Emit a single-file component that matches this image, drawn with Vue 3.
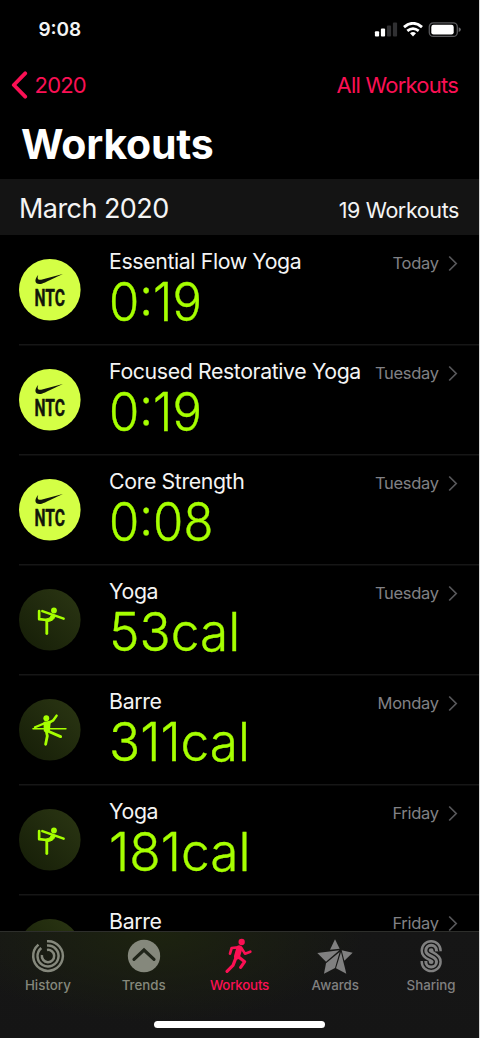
<script setup>
const workouts = [
  { name: 'Essential Flow Yoga', value: '0:19', day: 'Today', icon: 'ntc' },
  { name: 'Focused Restorative Yoga', value: '0:19', day: 'Tuesday', icon: 'ntc' },
  { name: 'Core Strength', value: '0:08', day: 'Tuesday', icon: 'ntc' },
  { name: 'Yoga', value: '53cal', day: 'Tuesday', icon: 'yoga' },
  { name: 'Barre', value: '311cal', day: 'Monday', icon: 'barre' },
  { name: 'Yoga', value: '181cal', day: 'Friday', icon: 'yoga' },
  { name: 'Barre', value: '', day: 'Friday', icon: 'barre' },
]
const tabs = ['History', 'Trends', 'Workouts', 'Awards', 'Sharing']
// stacked strokes that produce the parallel lines of the sharing glyph
const sharingLayers = [
  [32, 'currentColor'],
  [17.5, '#161616'],
  [9, 'currentColor'],
]
</script>

<template>
  <div class="screen">
    <header class="status">
      <span class="time">9:08</span>
      <svg class="indicators" width="88" height="18" viewBox="0 0 88 18">
        <g fill="#fff">
          <rect x="0.9" y="9.2" width="4.2" height="5.4" rx="1" />
          <rect x="6.9" y="6.6" width="4.2" height="8" rx="1" />
          <rect x="12.9" y="3.6" width="4.2" height="11" rx="1" fill="#303032" />
          <rect x="18.9" y="0.6" width="4.2" height="14" rx="1" fill="#303032" />
        </g>
        <g fill="none" stroke="#fff">
          <path d="M30 5.1 Q39 -2.4 48 5.1" stroke-width="2.9" />
          <path d="M33.3 8.9 Q39 4.2 44.7 8.9" stroke-width="2.7" />
        </g>
        <path d="M36 11.2 Q39 8.8 42 11.2 L39 14.4 Z" fill="#fff" />
        <rect x="55.3" y="0.8" width="28" height="13.6" rx="4" fill="none" stroke="#59595c" stroke-width="1.3" />
        <rect x="57.3" y="2.8" width="22.4" height="9.6" rx="2.2" fill="#fff" />
        <path d="M84.7 5.2 Q86.9 5.8 86.9 7.6 Q86.9 9.4 84.7 10 Z" fill="#68686b" />
      </svg>
    </header>

    <nav class="nav">
      <a class="back">
        <svg width="17" height="28" viewBox="0 0 17 28">
          <path d="M14.2 2.3 L2.8 14 L14.2 25.7" fill="none" stroke="#fb1054" stroke-width="3.8" stroke-linecap="round" stroke-linejoin="round" />
        </svg>
        <span>2020</span>
      </a>
      <a class="all">All Workouts</a>
    </nav>

    <h1>Workouts</h1>

    <section class="month">
      <span class="month-name">March 2020</span>
      <span class="month-count">19 Workouts</span>
    </section>

    <main class="list">
      <article v-for="(w, i) in workouts" :key="i" class="row">
        <svg v-if="w.icon === 'ntc'" class="badge" viewBox="0 0 61.6 61.6">
          <circle cx="30.8" cy="30.8" r="30.8" fill="#d4ff45" />
          <path d="M19.3 15.8 C15.2 20.5 15.4 25 20.5 25 C23 25 26.6 23.2 43.8 14.9 L22.2 20.7 C18.7 21.5 18 19.2 19.3 15.8 Z" fill="#11150a" />
          <text x="15.5" y="46.9" textLength="30.4" lengthAdjust="spacingAndGlyphs" class="ntc">NTC</text>
        </svg>
        <svg v-else class="badge" viewBox="58 57 185 185">
          <defs>
            <linearGradient :id="'disc' + i" x1="0" y1="1" x2="1" y2="0">
              <stop offset="0" stop-color="#151d07" />
              <stop offset="1" stop-color="#2b3613" />
            </linearGradient>
          </defs>
          <circle cx="150.5" cy="149.5" r="92.5" :fill="`url(#disc${i})`" />
          <g v-if="w.icon === 'yoga'" fill="none" stroke="#a6ff00" stroke-linecap="round" stroke-linejoin="round">
            <circle cx="163" cy="121.5" r="8.8" fill="#a6ff00" stroke="none" />
            <path d="M128 123.5 L192 146" stroke-width="7.5" />
            <path d="M118.5 123 V147.5 L141 150" stroke-width="8" />
            <path d="M138 148 L150 144 L156 135 L167 138 C163 150 155 154 141 155 Z" fill="#a6ff00" stroke-width="3" />
            <path d="M141.5 152 V191" stroke-width="8.5" />
          </g>
          <g v-else fill="none" stroke="#a6ff00" stroke-linecap="round" stroke-linejoin="round">
            <circle cx="140" cy="114.5" r="8.8" fill="#a6ff00" stroke="none" />
            <path d="M100 146 H134 M152 146 H199" stroke-width="4.5" />
            <path d="M137 129 L106 142" stroke-width="7" />
            <path d="M150 127 L161 121 L171 107" stroke-width="7.5" />
            <path d="M134 128 L151 125 L148 153 H135 Z" fill="#a6ff00" stroke-width="5" />
            <path d="M144 153 L183 170" stroke-width="8.5" />
            <path d="M140 153 L143 168 L138 193" stroke-width="8.5" />
          </g>
        </svg>
        <div class="info">
          <div class="name">{{ w.name }}</div>
          <div v-if="w.value" class="value" :class="{ cal: w.value.includes('cal') }">{{ w.value }}</div>
        </div>
        <div class="when">
          <span>{{ w.day }}</span>
          <svg width="10" height="17" viewBox="0 0 10 17">
            <path d="M1.2 1.5 L8.2 8.5 L1.2 15.5" fill="none" stroke="#58585b" stroke-width="1.7" />
          </svg>
        </div>
      </article>
    </main>

    <footer class="tabbar">
      <div class="tabs">
        <div v-for="(t, i) in tabs" :key="t" class="tab" :class="[{ active: i === 2 }, t.toLowerCase()]">
          <svg v-if="i === 0" class="ticon" viewBox="88 159 108 108">
            <g fill="none" stroke="currentColor" stroke-width="7.5">
              <path d="M139 168.6 A44.5 44.5 0 1 1 113.4 179" />
              <path d="M139 181.64 A31.5 31.5 0 1 1 121.8 188.9" />
              <path d="M139 194.74 A18.5 18.5 0 1 1 123.74 210" />
            </g>
          </svg>
          <svg v-else-if="i === 1" class="ticon" viewBox="377 159 108 108">
            <circle cx="431" cy="213" r="48.5" fill="currentColor" />
            <path d="M401 223 L431 195 L461 223" fill="none" stroke="#20251a" stroke-width="9.5" stroke-linecap="round" />
          </svg>
          <svg v-else-if="i === 2" class="ticon" viewBox="665 159 108 108">
            <circle cx="727" cy="171" r="9.5" fill="currentColor" />
            <g fill="none" stroke="currentColor" stroke-linecap="round" stroke-linejoin="round">
              <path d="M716 187 L697 189 L692 206" stroke-width="8" />
              <path d="M727 190 L737 206 L753 200" stroke-width="8" />
              <path d="M720 190 L713 214" stroke-width="18" />
              <path d="M718 216 L736 230 L724 247" stroke-width="9.5" />
              <path d="M710 218 L701 241 L683 259" stroke-width="9.5" />
            </g>
          </svg>
          <svg v-else-if="i === 3" class="ticon" viewBox="231 159 108 108">
            <g fill="currentColor">
              <path d="M285 163 L299 191 L270 194.5 Z" />
              <path d="M232 204 L298 196 L258 230 Z" />
              <path d="M299 201 L285 249 L252 266 L258 235 Z" />
              <path d="M303 201 L319 266 L288 250 Z" />
              <path d="M305 196 L338 203 L313 227 Z" />
            </g>
          </svg>
          <svg v-else class="ticon" viewBox="517 159 108 108">
            <path
              v-for="[width, color] in sharingLayers"
              :key="width"
              d="M587.5 199 V197 A16 16 0 0 0 555.5 197 C555.5 215 587.5 212 587.5 230 A16 16 0 0 1 555.5 230 V228"
              fill="none"
              :stroke="color"
              :stroke-width="width"
            />
          </svg>
          <span>{{ t }}</span>
        </div>
      </div>
      <div class="home"></div>
    </footer>
  </div>
</template>

<style>
body {
  margin: 0;
  background: #d8d8d8;
}
</style>

<style scoped>
.screen {
  width: 479px;
  height: 1038px;
  overflow: hidden;
  position: relative;
  display: flex;
  flex-direction: column;
  background: #000;
  color: #f4f4f4;
  font-family: Inter, "Liberation Sans", sans-serif;
  white-space: nowrap;
}
.status {
  height: 60px;
  box-sizing: border-box;
  padding: 18px 17px 0 38.5px;
  display: flex;
  justify-content: space-between;
}
.time {
  font-size: 19px;
  font-weight: 600;
  line-height: 24px;
  letter-spacing: -0.1px;
  font-feature-settings: "case";
}
.indicators {
  margin-top: 4px;
}
.nav {
  height: 50px;
  display: flex;
  justify-content: space-between;
  align-items: center;
  padding: 0 21px 0 11px;
  color: #fb1054;
  font-size: 22px;
  letter-spacing: -0.78px;
}
.back {
  display: flex;
  align-items: center;
  gap: 6.5px;
}
h1 {
  margin: 0;
  height: 69px;
  padding-left: 21px;
  font-size: 41px;
  font-weight: 700;
  line-height: 68px;
  letter-spacing: -0.2px;
  color: #fff;
}
.month {
  height: 56px;
  flex: none;
  display: flex;
  justify-content: space-between;
  padding: 0 20px 0 19px;
  background: #141414;
}
.month-name {
  font-size: 27px;
  line-height: 59px;
  letter-spacing: -0.55px;
}
.month-count {
  font-size: 21.5px;
  line-height: 62px;
  letter-spacing: -0.4px;
}
.list {
  height: 697px;
  flex: none;
  overflow: hidden;
}
.row {
  height: 110px;
  margin-left: 19px;
  display: flex;
  box-sizing: border-box;
  border-bottom: 1px solid #161616;
  box-shadow: 0 1px #0b0b0b;
}
.badge {
  width: 61.6px;
  height: 61.6px;
  margin-top: 24.3px;
  flex: none;
}
.ntc {
  font: 700 23.2px Roboto, sans-serif;
  fill: #11150a;
  stroke: #11150a;
  stroke-width: 0.4px;
}
.info {
  flex: 1;
  padding: 12px 0 0 28.5px;
}
.name {
  font-size: 21.3px;
  line-height: 28px;
  letter-spacing: -0.39px;
}
.value {
  margin-top: 3px;
  font-size: 53px;
  font-weight: 300;
  line-height: 49px;
  font-feature-settings: "case";
  color: #a6ff00;
  -webkit-text-stroke: 0.4px #a6ff00;
  transform: scaleX(0.925);
  transform-origin: left;
}
.value.cal {
  transform: scaleX(0.97);
}
.when {
  display: flex;
  align-items: center;
  gap: 9.3px;
  height: 28px;
  padding: 14px 21px 0 0;
  font-size: 16.5px;
  letter-spacing: -0.3px;
  color: #818185;
}
.tabbar {
  position: absolute;
  left: 0;
  right: 0;
  bottom: 0;
  height: 107px;
  box-sizing: border-box;
  border-top: 1.5px solid #2d2e2b;
  background:
    radial-gradient(ellipse 210px 90px at 155px 0, #1d230f, rgba(29, 35, 15, 0)),
    linear-gradient(#161616, #151515);
}
.tabs {
  display: flex;
}
.tab {
  flex: 1;
  display: flex;
  flex-direction: column;
  align-items: center;
  padding-top: 6px;
  color: #808080;
  font-size: 13.3px;
  font-weight: 500;
  line-height: 18px;
}
.ticon {
  width: 36px;
  height: 36px;
  margin-bottom: 2px;
}
.history,
.trends {
  color: #85887c;
}
.active {
  color: #fb1054;
}
.tab.workouts {
  letter-spacing: -0.2px;
}
.home {
  width: 171px;
  height: 6.5px;
  margin: 27px auto 0;
  border-radius: 4px;
  background: #fff;
}
</style>
